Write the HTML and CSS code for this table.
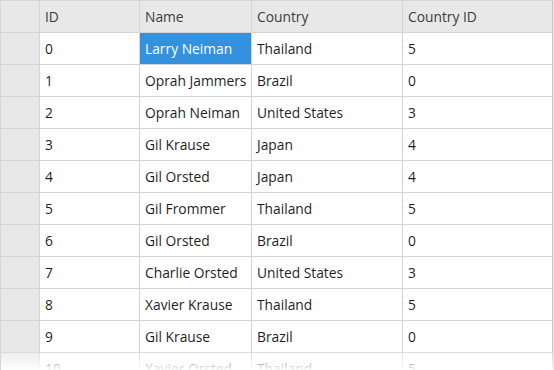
FILE: index.html
```html
<!DOCTYPE html>
<html>
<head>
<meta charset="utf-8">
<link rel="stylesheet" href="styles.css">
</head>
<body>
<div class="grid-wrap">
  <div class="grid">
    <div class="hdr rh"></div><div class="hdr">ID</div><div class="hdr">Name</div><div class="hdr">Country</div><div class="hdr">Country ID</div>
    <div class="rh"></div><div class="c">0</div><div class="c sel">Larry Neiman</div><div class="c">Thailand</div><div class="c">5</div>
    <div class="rh"></div><div class="c">1</div><div class="c">Oprah Jammers</div><div class="c">Brazil</div><div class="c">0</div>
    <div class="rh"></div><div class="c">2</div><div class="c">Oprah Neiman</div><div class="c">United States</div><div class="c">3</div>
    <div class="rh"></div><div class="c">3</div><div class="c">Gil Krause</div><div class="c">Japan</div><div class="c">4</div>
    <div class="rh"></div><div class="c">4</div><div class="c">Gil Orsted</div><div class="c">Japan</div><div class="c">4</div>
    <div class="rh"></div><div class="c">5</div><div class="c">Gil Frommer</div><div class="c">Thailand</div><div class="c">5</div>
    <div class="rh"></div><div class="c">6</div><div class="c">Gil Orsted</div><div class="c">Brazil</div><div class="c">0</div>
    <div class="rh"></div><div class="c">7</div><div class="c">Charlie Orsted</div><div class="c">United States</div><div class="c">3</div>
    <div class="rh"></div><div class="c">8</div><div class="c">Xavier Krause</div><div class="c">Thailand</div><div class="c">5</div>
    <div class="rh"></div><div class="c">9</div><div class="c">Gil Krause</div><div class="c">Brazil</div><div class="c">0</div>
    <div class="rh"></div><div class="c">10</div><div class="c">Xavier Orsted</div><div class="c">Thailand</div><div class="c">5</div>
  </div>
  <div class="fade"></div>
</div>
</body>
</html>
```
FILE: styles.css
```css
html, body {
  margin: 0;
  padding: 0;
  background: #ffffff;
}
.grid-wrap {
  position: relative;
  width: 554px;
  height: 370px;
  overflow: hidden;
  box-sizing: border-box;
  border-left: 1px solid #d6d6d6;
  border-top: 1px solid #d6d6d6;
  border-right: 1px solid #ececec;
  font-family: "Open Sans", "Noto Sans", sans-serif;
  font-size: 13.8px;
}
.grid {
  display: grid;
  grid-template-columns: 39px 100px 112px 151px 150px;
  grid-auto-rows: 32px;
  width: 552px;
}
.grid > div {
  box-sizing: border-box;
  border-right: 1px solid #d4d4d4;
  border-bottom: 1px solid #d4d4d4;
  padding-left: 5px;
  display: flex;
  align-items: center;
  white-space: nowrap;
  overflow: hidden;
  color: #1f1f1f;
}
.grid > div:nth-child(5n) {
  border-right-color: #c4c4c4;
}
.hdr {
  background: #e8e8e8;
  color: #3c3c3c !important;
}
.rh {
  background: #e8e8e8;
}
.sel {
  background: #3391dd;
  color: #ffffff !important;
}
.fade {
  position: absolute;
  left: 0;
  right: 0;
  bottom: 0;
  height: 18px;
  background: linear-gradient(to bottom, rgba(255,255,255,0.2), rgba(255,255,255,0.95));
}
```
